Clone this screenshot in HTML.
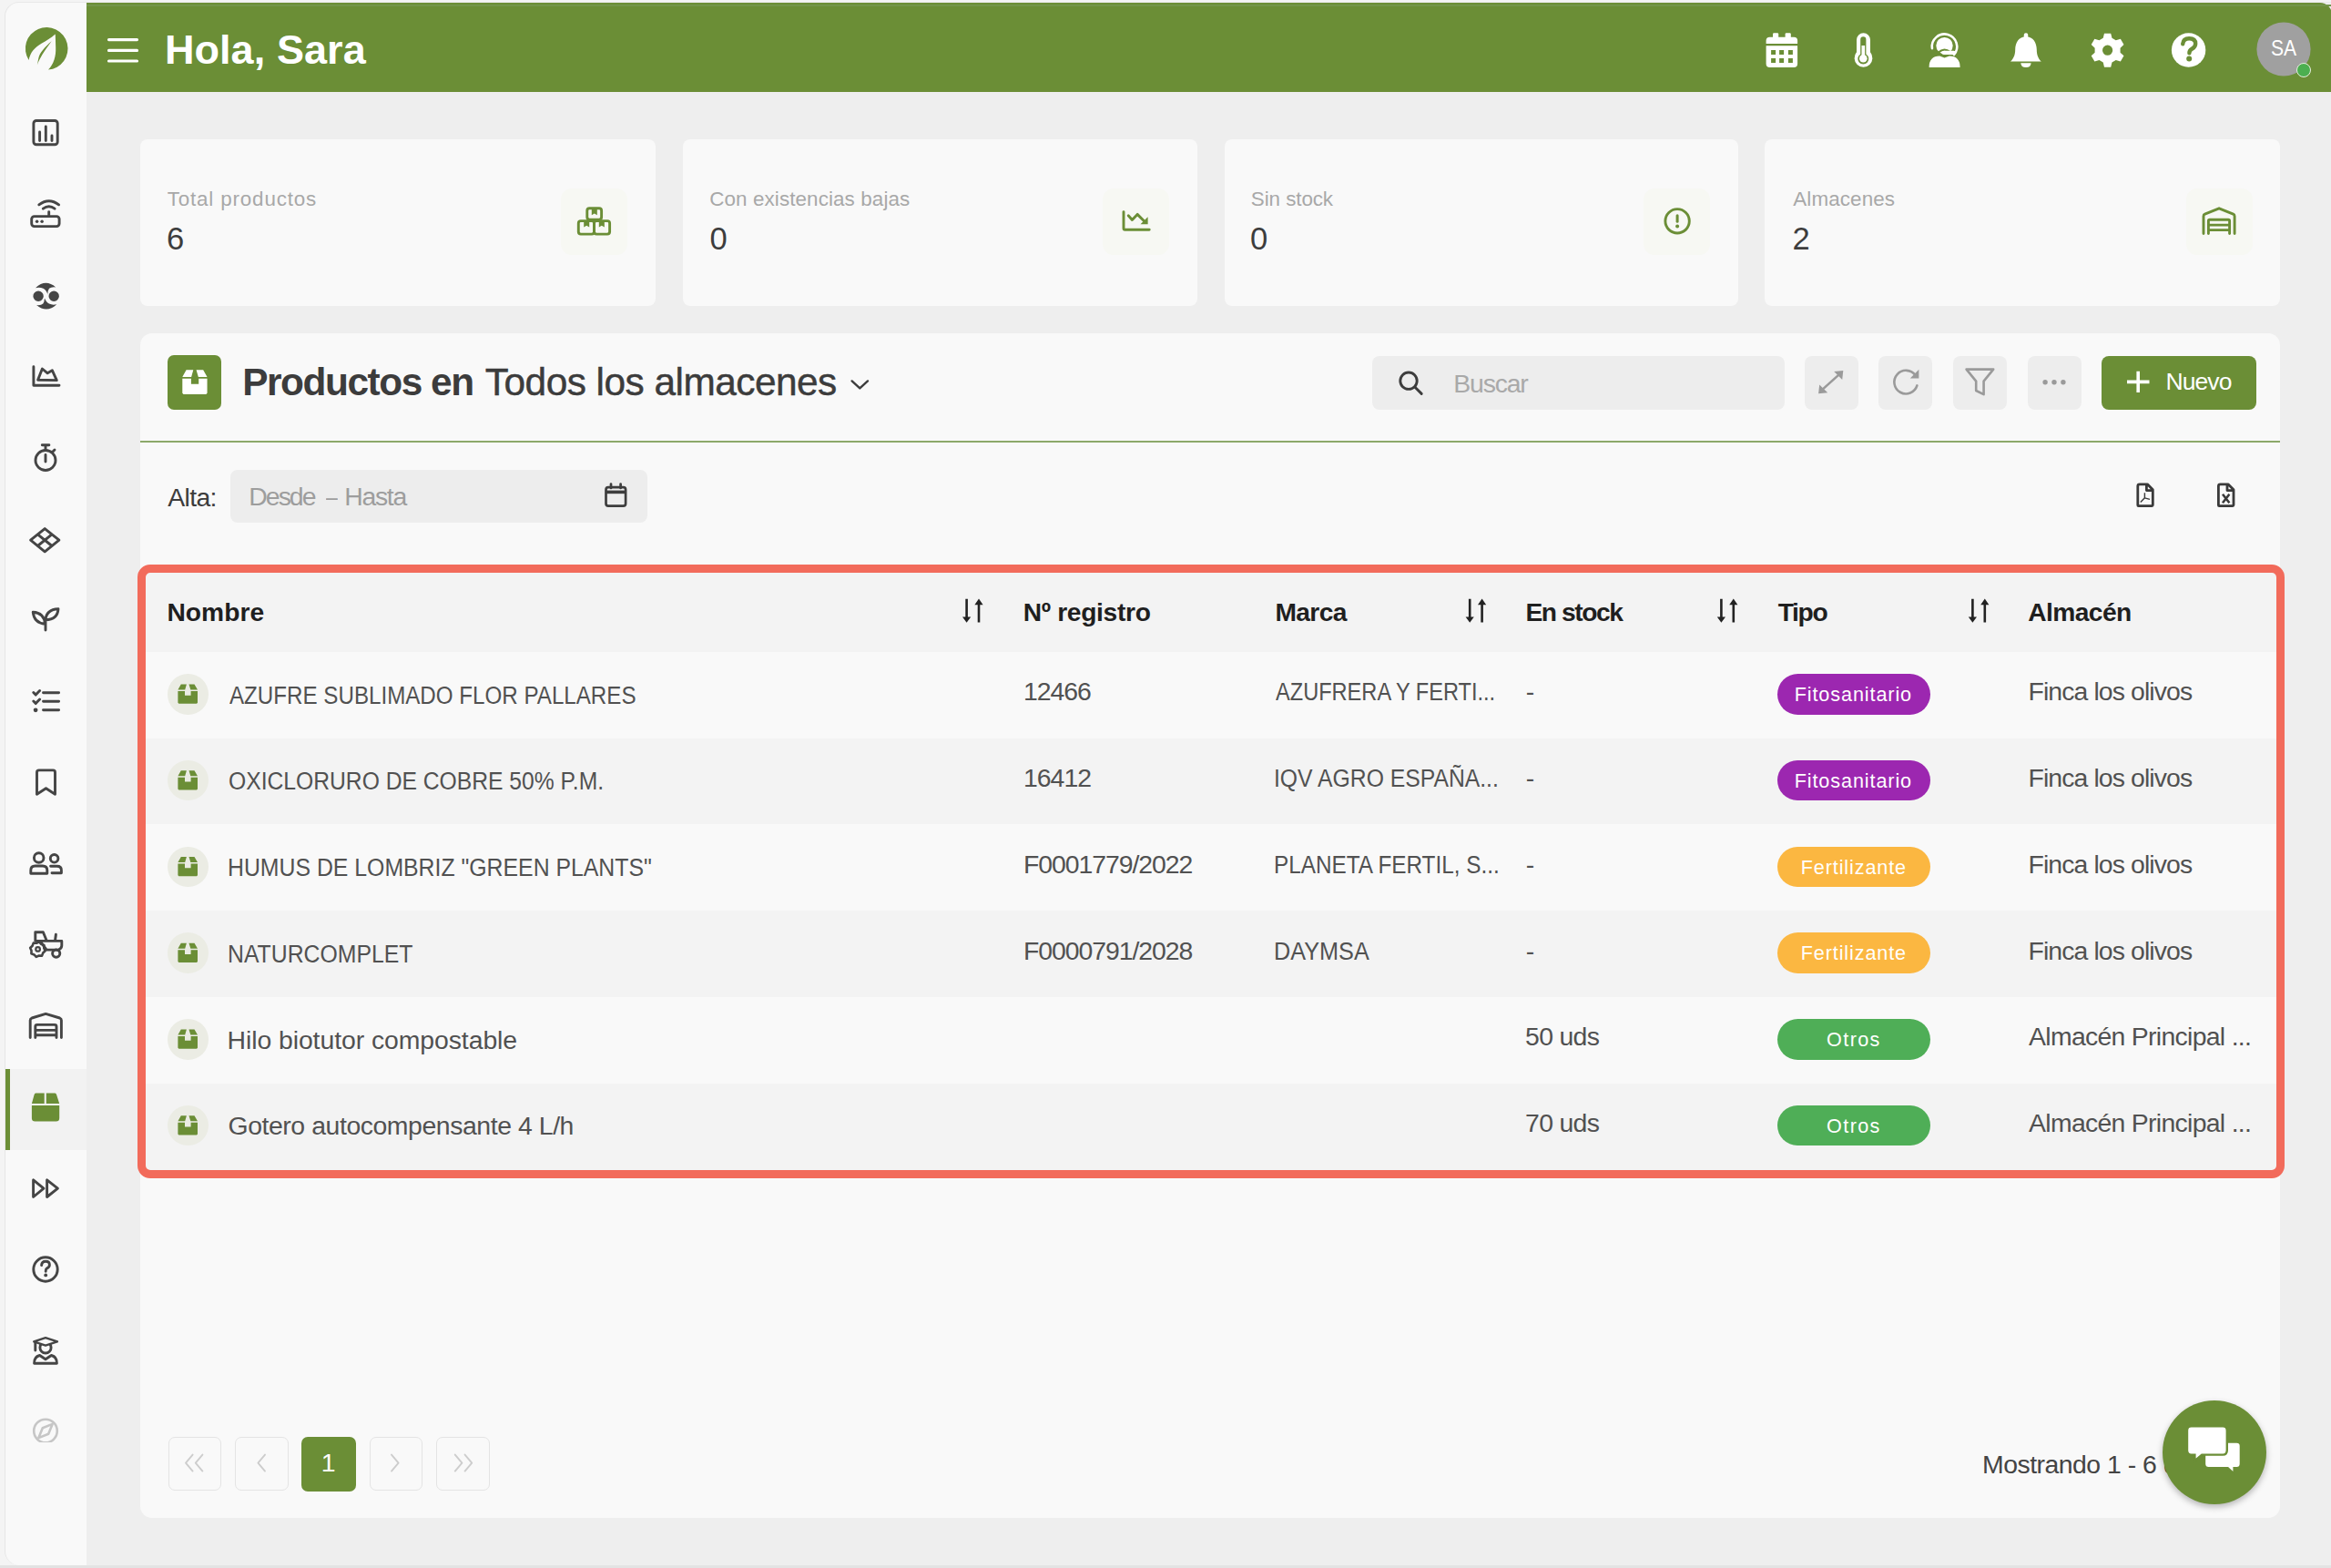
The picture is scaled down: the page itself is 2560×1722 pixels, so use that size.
<!DOCTYPE html>
<html><head><meta charset="utf-8">
<style>
*{box-sizing:border-box;margin:0;padding:0}
html,body{width:2560px;height:1722px;overflow:hidden}
body{background:#f4f4f4;position:relative;font-family:"Liberation Sans",sans-serif;color:#444}
.a{position:absolute}
.t{position:absolute;white-space:nowrap;line-height:1}
#bstrip{left:0;top:1719px;width:2560px;height:3px;background:#e3e3e3}
#win{left:5px;top:2px;width:2560px;height:1717px;border-left:1px solid #e6e6e6;border-top:1px solid #e9e9e9;border-radius:16px 0 0 16px;background:#eeeeee;overflow:hidden}
#side{left:0;top:0;width:89px;height:1716px;background:#f9f9f9}
#act{left:0;top:1170.5px;width:89px;height:89px;background:#f2f2f2}
#actbar{left:0;top:1170.5px;width:4.5px;height:89px;background:#6b8e36}
#hdr{left:89px;top:0;width:2466px;height:98px;background:#6b8e36;border-top-right-radius:13px}
#hdr .topline{left:0;top:2px;width:100%;height:2px;background:#739549}
.card{position:absolute;top:150px;height:183px;background:#f9f9f9;border-radius:8px}
.ib{position:absolute;top:54px;width:73px;height:73px;border-radius:12px;background:#f7f8f3}
#panel{left:148px;top:362.5px;width:2350px;height:1301px;background:#f9f9f9;border-radius:13px}
.lbl{font-size:25px;color:#a6a6a6}
.num{font-size:36px;color:#3d3d3d}
.rt{font-size:27.5px;color:#474747}
.bdg{position:absolute;left:1951.5px;width:168px;height:44.5px;border-radius:23px;color:#fff;font-size:23px;line-height:44.5px;text-align:center;white-space:nowrap}
</style></head>
<body>
<div id="bstrip" class="a"></div>
<div id="win" class="a">
  <div id="side" class="a"></div>
  <div id="act" class="a"></div>
  <div id="actbar" class="a"></div>
  <div id="hdr" class="a"><div class="topline a"></div></div>
  <div class="card" style="left:148px;width:566px"><div class="ib" style="left:462px"></div></div>
  <div class="card" style="left:743.5px;width:565.5px"><div class="ib" style="left:461.5px"></div></div>
  <div class="card" style="left:1339px;width:564px"><div class="ib" style="left:460px"></div></div>
  <div class="card" style="left:1932px;width:565.5px"><div class="ib" style="left:462.5px"></div></div>
  <div id="panel" class="a"></div>
</div>
<div class="a" style="left:1506.5px;top:390.5px;width:453px;height:59.5px;border-radius:8px;background:#ededed"></div>
<div class="a" style="left:1981.5px;top:390.5px;width:59px;height:59.5px;border-radius:8px;background:#ededed"></div>
<div class="a" style="left:2063px;top:390.5px;width:59px;height:59.5px;border-radius:8px;background:#ededed"></div>
<div class="a" style="left:2144.5px;top:390.5px;width:59.5px;height:59.5px;border-radius:8px;background:#ededed"></div>
<div class="a" style="left:2226.5px;top:390.5px;width:59px;height:59.5px;border-radius:8px;background:#ededed"></div>
<div class="a" style="left:2308px;top:390.5px;width:169.5px;height:59.5px;border-radius:8px;background:#6b8e36"></div>
<div class="a" style="left:184px;top:390.4px;width:59.4px;height:59.6px;border-radius:7px;background:#6b8e36"></div>
<div class="a" style="left:154px;top:484px;width:2349.5px;height:2px;background:#8ca96a"></div>
<div class="a" style="left:252.5px;top:516px;width:458.5px;height:58px;border-radius:8px;background:#ededed"></div>
<div class="a" style="left:160px;top:629px;width:2340px;height:87px;background:#f3f3f3"></div>
<div class="a" style="left:160px;top:811px;width:2340px;height:94px;background:#f3f3f3"></div>
<div class="a" style="left:160px;top:1000px;width:2340px;height:95px;background:#f3f3f3"></div>
<div class="a" style="left:160px;top:1190px;width:2340px;height:95px;background:#f3f3f3"></div>
<div class="a" style="left:151px;top:620px;width:2358px;height:673.7px;border:9px solid #f26b5b;border-radius:14px"></div>
<div class="a" style="left:184.3px;top:740px;width:44.6px;height:44.6px;border-radius:50%;background:#ebece4"></div>
<div class="a" style="left:184.3px;top:834.75px;width:44.6px;height:44.6px;border-radius:50%;background:#ebece4"></div>
<div class="a" style="left:184.3px;top:929.5px;width:44.6px;height:44.6px;border-radius:50%;background:#ebece4"></div>
<div class="a" style="left:184.3px;top:1024.25px;width:44.6px;height:44.6px;border-radius:50%;background:#ebece4"></div>
<div class="a" style="left:184.3px;top:1119px;width:44.6px;height:44.6px;border-radius:50%;background:#ebece4"></div>
<div class="a" style="left:184.3px;top:1213.75px;width:44.6px;height:44.6px;border-radius:50%;background:#ebece4"></div>
<div class="a" style="left:184.5px;top:1578px;width:58.5px;height:59px;border-radius:7px;border:1.5px solid #e4e4e4"></div>
<div class="a" style="left:258.25px;top:1578px;width:58.5px;height:59px;border-radius:7px;border:1.5px solid #e4e4e4"></div>
<div class="a" style="left:331px;top:1578px;width:59.5px;height:59.5px;border-radius:7px;background:#6b8e36"></div>
<div class="a" style="left:405.5px;top:1578px;width:58.5px;height:59px;border-radius:7px;border:1.5px solid #e4e4e4"></div>
<div class="a" style="left:479.25px;top:1578px;width:58.5px;height:59px;border-radius:7px;border:1.5px solid #e4e4e4"></div>

<svg class="a" style="left:0;top:0" width="2560" height="1722" viewBox="0 0 2560 1722">
<g stroke="#fff" stroke-width="3.2" stroke-linecap="round"><path d="M119.5 43.6H150.5M119.5 55.4H150.5M119.5 67H150.5"/></g>
<g fill="#fff"><rect x="1947" y="36.3" width="6.2" height="7" rx="1.2"/><rect x="1960.6" y="36.3" width="6.2" height="7" rx="1.2"/><path d="M1939.6 48V44.8Q1939.6 40.8 1943.6 40.8H1970.1Q1974.1 40.8 1974.1 44.8V48Z"/><path fill-rule="evenodd" d="M1939.6 50.3H1974.1V70.1Q1974.1 74.1 1970.1 74.1H1943.6Q1939.6 74.1 1939.6 70.1Z M1945.1 55.1h5v5h-5z M1954.1 55.1h5v5h-5z M1963.9 55.1h5v5h-5z M1945.1 64.1h5v5h-5z M1954.1 64.1h5v5h-5z M1963.9 64.1h5v5h-5z"/></g>
<g><path fill="#fff" d="M2039 43.8a7.5 7.5 0 0 1 15 0V57.3a9.9 9.9 0 1 1 -15 0Z"/><path fill="#6b8e36" d="M2043.2 43.4a3.1 3.1 0 0 1 6.2 0V59.4a6 6 0 1 1 -6.2 0Z"/><rect fill="#fff" x="2044.5" y="50" width="3.6" height="12"/><circle fill="#fff" cx="2046.3" cy="64.2" r="4.3"/></g>
<path fill="none" stroke="#fff" stroke-width="2.6" stroke-linecap="round" d="M2121.93 53.1A13.7 13.7 0 1 1 2146 60"/><circle fill="#fff" cx="2135.5" cy="50.1" r="9.2"/><path fill="none" stroke="#6b8e36" stroke-width="2.2" d="M2128.6 57.8Q2135 51.6 2141.8 57.2"/><path fill="#fff" d="M2132.6 57.9Q2132.6 55.8 2134.8 55.8H2145.6Q2147.8 55.8 2147.8 57.9Q2147.8 60 2145.6 60H2134.8Q2132.6 60 2132.6 57.9Z"/><path fill="#fff" d="M2118.6 74.1Q2118.6 61.6 2130.2 61.6L2135.5 63.4L2140.9 61.6Q2152.6 61.6 2152.6 74.1Z"/>
<g fill="#fff"><rect x="2222.8" y="36.3" width="4.4" height="6" rx="2"/><path d="M2225 40.2C2217 40.2 2213.2 47 2213.2 54.5C2213.2 61 2211 64.5 2208 67.6H2241.8C2238.8 64.5 2236.8 61 2236.8 54.5C2236.8 47 2233 40.2 2225 40.2Z"/><path d="M2219.3 69.2H2230.6Q2230.3 74.1 2225 74.1Q2219.6 74.1 2219.3 69.2Z"/></g>
<path fill="#fff" fill-rule="evenodd" d="M2309.74 41.86 L2310.99 36.65 L2318.21 36.65 L2319.46 41.86 L2323.73 44.32 L2328.86 42.80 L2332.47 49.05 L2328.58 52.73 L2328.58 57.67 L2332.47 61.35 L2328.86 67.60 L2323.73 66.08 L2319.46 68.54 L2318.21 73.75 L2310.99 73.75 L2309.74 68.54 L2305.47 66.08 L2300.34 67.60 L2296.73 61.35 L2300.62 57.67 L2300.62 52.73 L2296.73 49.05 L2300.34 42.80 L2305.47 44.32 Z M2309.00 55.20 a5.60 5.60 0 1 0 11.20 0 a5.60 5.60 0 1 0 -11.20 0 Z"/>
<circle fill="#fff" cx="2403.6" cy="55" r="18.7"/><path fill="none" stroke="#6b8e36" stroke-width="4.4" stroke-linecap="round" d="M2397.2 48.2Q2397.8 42.2 2404.2 42.2Q2411.2 42.2 2411.2 48Q2411.2 51.6 2407.2 53.8Q2404.4 55.4 2404.4 58.2"/><circle fill="#6b8e36" cx="2404.2" cy="64.6" r="3"/>
<circle fill="#a0a0a0" cx="2508" cy="54" r="29.6"/>
<g fill="#6b8e36"><path d="M31.6 66A23.3 23.3 0 1 1 53 76.6C59 70.5 61.6 62 61.2 52C61 46 61 41 60.7 37.4C56 41.5 51 44.5 45.5 47.8C38.2 52.2 33.2 57.5 31.6 66Z"/><path d="M56.6 45.3C49.5 51.5 43.5 58 42.3 64C41.8 66.8 41.2 69.5 40.8 71.6C43.3 64.5 48 56.8 56.6 45.3Z"/></g>
<g fill="none" stroke="#454545" stroke-width="2.9" stroke-linecap="round" stroke-linejoin="round">
<rect x="36.9" y="132.5" width="26.3" height="26.3" rx="3"/><path d="M43.6 145V154.6M50.3 139V154.6M57 149V154.6"/>
<rect x="34.7" y="237.6" width="30.4" height="11" rx="3"/><path d="M53.7 237.6V232.6M47.3 229.2Q53.7 224.3 60.1 229.2M42.8 224.8Q53.7 216.5 64.6 224.8"/>
<path d="M36.9 402.8V423.3H65"/><path d="M41.6 417.3L46.4 405L52.2 409.8L57.4 406.8L62.3 417.6Z"/>
<circle cx="50" cy="505.5" r="11"/><path d="M46.3 488.7H53.9M50 489V494.5M57.5 496.5L60 494M50 499.5V507"/>
<path d="M33.6 593.2L49.2 580.6L64.9 593.2L49.2 605.8Z M41.4 586.9L57 599.5 M57 586.9L41.4 599.5"/>
<path d="M36.2 672.2Q37.5 684.5 49.5 685.2Q48.5 672.8 36.2 672.2Z M50 680.8Q50.8 669.2 64 668.7Q63.2 680.6 50 680.8Z M50 681V692"/>
<path d="M36.8 760.6L39.2 763.1L43.6 758.6 M36.8 770.1L39.2 772.6L43.6 768.1 M47.5 760.8H64.6 M47.5 770.3H64.6 M47.5 779.8H64.6"/>
<path d="M40.5 872.2V848.2Q40.5 845.9 42.8 845.9H58.3Q60.5 845.9 60.5 848.2V872.2L50.5 865.8Z"/>
<circle cx="42.7" cy="942" r="5.3"/><circle cx="59.6" cy="942.8" r="4.3"/><path d="M33.8 959.3V955.8Q33.8 951 38.6 951H46.8Q51.8 951 51.8 955.8V959.3Z M55.6 951.3H62.6Q67.4 951.3 67.4 955.8V958.7H57"/>
<path stroke-width="2.6" d="M49.64 1044.24 L47.22 1046.49 L46.07 1049.58 L42.77 1049.47 L39.76 1050.84 L37.51 1048.42 L34.42 1047.27 L34.53 1043.97 L33.16 1040.96 L35.58 1038.71 L36.73 1035.62 L40.03 1035.73 L43.04 1034.36 L45.29 1036.78 L48.38 1037.93 L48.27 1041.23Z"/><circle cx="41.6" cy="1042.4" r="2.3" stroke-width="2.2"/><circle cx="61.7" cy="1047.1" r="4.1"/><path d="M38.8 1033.2V1023.8H47.4L51.3 1033.2 M39.6 1033.4H67.8V1038.6Q67.8 1041.6 64.3 1043.1H51.2L44.3 1034 M61.4 1026.3L60.5 1033"/>
<path d="M33.2 1139.6V1120.6Q33.2 1118.8 35 1118L50.2 1113.4L65.6 1118Q67.4 1118.8 67.4 1120.6V1139.6 M38.8 1139.6V1127.4Q38.8 1125.4 40.8 1125.4H60Q62 1125.4 62 1127.4V1139.6 M38.8 1131.4H62 M38.8 1136.7H62"/>
<path d="M36.6 1295.9V1314.5L48 1305.2Z M51.6 1295.9V1314.5L63.4 1305.2Z"/>
<circle cx="50" cy="1394" r="13.2"/><path d="M45.6 1389.6Q45.8 1385.2 50.2 1385.2Q54.4 1385.2 54.4 1389Q54.4 1391.6 51.6 1392.8Q50.2 1393.6 50.2 1396.2"/>
<path d="M38.8 1474V1483 M37.6 1497.2Q37.4 1490 43.6 1488.5L50 1492.8L56.4 1488.5Q62.6 1490 62.4 1497.2Z"/><circle cx="50" cy="1479.9" r="6.1"/>
</g>
<circle fill="#454545" cx="50.2" cy="1400.4" r="1.9"/><circle fill="#454545" cx="40.6" cy="243.2" r="1.75"/><circle fill="#454545" cx="46.1" cy="243.2" r="1.75"/><circle fill="#454545" cx="39.1" cy="779.8" r="2.4"/>
<path fill="#f9f9f9" stroke="#454545" stroke-width="2.3" stroke-linejoin="round" d="M37.2 1473.4L50 1469.1L63 1473.4L50 1477.6Z"/>
<g fill="#454545"><path d="M39 316.2Q50 305.8 61.2 315.4Q56.5 314.8 54 316.8Q52.2 319 52.6 323.6Q50.8 318.6 47.4 316.8Q43.5 315 39 316.2Z"/><path d="M62.3 334.2Q51.3 344.6 40.1 335Q44.8 335.6 47.3 333.6Q49.1 331.4 48.7 326.8Q50.5 331.8 53.9 333.6Q57.8 335.4 62.3 334.2Z"/></g><g fill="#454545" stroke="#f9f9f9" stroke-width="1.6"><circle cx="42.1" cy="325.2" r="6.5"/><circle cx="59.2" cy="325.2" r="6.5"/></g>
<g fill="#6b8e36"><path d="M39.3 1200.4H48.7V1212H34.9L37.5 1202.6Q38 1200.4 39.3 1200.4Z"/><path d="M50.8 1200.4H60.3Q61.7 1200.4 62.2 1202.6L65.2 1212H50.8Z"/><path d="M34.9 1214H65.2V1228Q65.2 1231.6 61.6 1231.6H38.5Q34.9 1231.6 34.9 1228Z"/></g>
<svg x="0" y="1540" width="95" height="44" viewBox="0 1540 95 44" overflow="hidden"><g fill="none" stroke="#c6c6c6" stroke-width="2.6"><circle cx="50" cy="1571.5" r="12.8"/><path stroke-linejoin="round" d="M57.6 1563.9L53.2 1574.7L42.4 1579.1L46.8 1568.3Z"/></g></svg>
<g fill="none" stroke="#6b8e36" stroke-width="2.9" stroke-linejoin="round">
<rect x="644.8" y="228.8" width="15.8" height="12.4" rx="2.6"/><rect x="635.3" y="242.6" width="17.2" height="14.5" rx="2.6"/><rect x="652.5" y="242.6" width="17.1" height="14.5" rx="2.6"/>
<path stroke-linecap="round" d="M1234 232.6V250.8Q1234 252.3 1235.5 252.3H1262.2"/><path stroke-linecap="round" d="M1239.2 236.8L1243.4 241.5L1249.1 235.4L1256.5 242.8"/>
<circle cx="1842.1" cy="242.8" r="13.2"/>
<path stroke-linecap="round" d="M2420 256.6V237.4Q2420 235.8 2421.5 235.2L2437.1 228.8L2452.6 235.2Q2454.1 235.8 2454.1 237.4V256.6 M2425.4 256.6V242.7Q2425.4 241.3 2426.8 241.3H2447.2Q2448.6 241.3 2448.6 242.7V256.6 M2425.4 247.1H2448.6 M2425.4 252.6H2448.6"/>
</g>
<g fill="#6b8e36"><path d="M649.8 229.5H655.8V236.2L652.8 234.4L649.8 236.2Z M641.2 243.2H647.2V249.6L644.2 247.8L641.2 249.6Z M657.8 243.2H663.8V249.6L660.8 247.8L657.8 249.6Z"/>
<path d="M1252.5 246.2H1260.6V238.3Z"/>
<rect x="1840.6" y="235.2" width="3" height="9.6" rx="1.5"/><circle cx="1842.1" cy="248.6" r="2"/></g>
<path fill="#fff" d="M204.59 406.20 L212.29 406.20 L210.14 413.90 L200.30 413.90 Z M215.57 406.20 L223.14 406.20 L227.56 413.90 L217.84 413.90 Z M200.30 415.66 L209.89 415.66 L209.89 421.72 L218.22 421.72 L218.22 415.66 L227.56 415.66 L227.56 431.69 L226.30 432.95 L201.56 432.95 L200.30 431.69 Z"/>
<g fill="none" stroke="#3d3d3d" stroke-width="2.9" stroke-linecap="round"><circle cx="1547" cy="418.2" r="9.2"/><path d="M1553.8 425L1561.2 432.4"/></g>
<g fill="none" stroke="#9a9a9a" stroke-width="2.6" stroke-linecap="round" stroke-linejoin="round">
<path d="M2000.5 428.6L2020.8 410.4"/>
<path d="M2103.6 412.2A12.8 12.8 0 1 0 2105.4 423.4"/>
<path d="M2159.6 405.6H2189.2L2178.6 418.6V433.2L2170.2 429V418.6Z"/>
</g>
<g fill="#9a9a9a"><path d="M1997.1 432.2L1998.2 422.4L2007.2 431.2Z M2024.3 407.1L2023.2 416.9L2014.2 408.1Z"/><path d="M2107.4 405.8L2107.4 415.6L2097.8 415.6Z"/><circle cx="2246.1" cy="419.8" r="2.7"/><circle cx="2256" cy="419.8" r="2.7"/><circle cx="2265.9" cy="419.8" r="2.7"/></g>
<path stroke="#fff" stroke-width="3.6" d="M2336 419.4H2360.5M2348.2 407.8V431"/>
<path fill="none" stroke="#3c3c3c" stroke-width="2.4" stroke-linecap="round" stroke-linejoin="round" d="M935.6 418.4L944.3 426.4L953 418.4"/>
<g fill="none" stroke="#3d3d3d" stroke-width="2.7" stroke-linejoin="round"><rect x="665.5" y="535.2" width="21.6" height="20.5" rx="2.6"/><path d="M665.5 540.4H687.1" stroke-width="3.6"/><path stroke-linecap="round" d="M671 531.6V536 M681.6 531.6V536"/></g>
<g fill="none" stroke="#3a3a3a" stroke-width="2.8" stroke-linejoin="round"><path d="M2347.8 554.8V533.8Q2347.8 531.8 2349.8 531.8H2358.4L2364.3 537.8V554.6Q2364.3 555.6 2363.3 555.6H2348.6Q2347.8 555.6 2347.8 554.8Z M2357.4 532V538.6H2364"/><path d="M2436.4 554.8V533.8Q2436.4 531.8 2438.4 531.8H2447L2453 537.8V554.6Q2453 555.6 2452 555.6H2437.2Q2436.4 555.6 2436.4 554.8Z M2446 532V538.6H2452.6"/></g>
<path fill="none" stroke="#3a3a3a" stroke-width="1.4" d="M2355.4 541.2V546.8M2355.4 546.8L2350.8 551.6M2355.4 546.8L2361 548.4"/>
<path fill="none" stroke="#3a3a3a" stroke-width="2.6" d="M2441 542.8L2448.4 552.2M2448.4 542.8L2441 552.2"/>
<path stroke="#222" stroke-width="2.6" d="M1061.6 657.8V679M1075.0 662.5V683.6"/><path fill="#222" d="M1057.0 677.4H1066.2L1061.6 683.8Z M1070.4 664.2H1079.6L1075.0 657.6Z"/>
<path stroke="#222" stroke-width="2.6" d="M1614.2 657.8V679M1627.6 662.5V683.6"/><path fill="#222" d="M1609.6 677.4H1618.8L1614.2 683.8Z M1623.0 664.2H1632.2L1627.6 657.6Z"/>
<path stroke="#222" stroke-width="2.6" d="M1890.4 657.8V679M1903.8 662.5V683.6"/><path fill="#222" d="M1885.8 677.4H1895.0L1890.4 683.8Z M1899.2 664.2H1908.4L1903.8 657.6Z"/>
<path stroke="#222" stroke-width="2.6" d="M2166.4 657.8V679M2179.8 662.5V683.6"/><path fill="#222" d="M2161.8 677.4H2171.0L2166.4 683.8Z M2175.2 664.2H2184.4L2179.8 657.6Z"/>
<path fill="#6b8e36" d="M198.80 751.50 L204.90 751.50 L203.20 757.60 L195.40 757.60 Z M207.50 751.50 L213.50 751.50 L217.00 757.60 L209.30 757.60 Z M195.40 759.00 L203.00 759.00 L203.00 763.80 L209.60 763.80 L209.60 759.00 L217.00 759.00 L217.00 771.70 L216.00 772.70 L196.40 772.70 L195.40 771.70 Z"/>
<path fill="#6b8e36" d="M198.80 846.25 L204.90 846.25 L203.20 852.35 L195.40 852.35 Z M207.50 846.25 L213.50 846.25 L217.00 852.35 L209.30 852.35 Z M195.40 853.75 L203.00 853.75 L203.00 858.55 L209.60 858.55 L209.60 853.75 L217.00 853.75 L217.00 866.45 L216.00 867.45 L196.40 867.45 L195.40 866.45 Z"/>
<path fill="#6b8e36" d="M198.80 941.00 L204.90 941.00 L203.20 947.10 L195.40 947.10 Z M207.50 941.00 L213.50 941.00 L217.00 947.10 L209.30 947.10 Z M195.40 948.50 L203.00 948.50 L203.00 953.30 L209.60 953.30 L209.60 948.50 L217.00 948.50 L217.00 961.20 L216.00 962.20 L196.40 962.20 L195.40 961.20 Z"/>
<path fill="#6b8e36" d="M198.80 1035.75 L204.90 1035.75 L203.20 1041.85 L195.40 1041.85 Z M207.50 1035.75 L213.50 1035.75 L217.00 1041.85 L209.30 1041.85 Z M195.40 1043.25 L203.00 1043.25 L203.00 1048.05 L209.60 1048.05 L209.60 1043.25 L217.00 1043.25 L217.00 1055.95 L216.00 1056.95 L196.40 1056.95 L195.40 1055.95 Z"/>
<path fill="#6b8e36" d="M198.80 1130.50 L204.90 1130.50 L203.20 1136.60 L195.40 1136.60 Z M207.50 1130.50 L213.50 1130.50 L217.00 1136.60 L209.30 1136.60 Z M195.40 1138.00 L203.00 1138.00 L203.00 1142.80 L209.60 1142.80 L209.60 1138.00 L217.00 1138.00 L217.00 1150.70 L216.00 1151.70 L196.40 1151.70 L195.40 1150.70 Z"/>
<path fill="#6b8e36" d="M198.80 1225.25 L204.90 1225.25 L203.20 1231.35 L195.40 1231.35 Z M207.50 1225.25 L213.50 1225.25 L217.00 1231.35 L209.30 1231.35 Z M195.40 1232.75 L203.00 1232.75 L203.00 1237.55 L209.60 1237.55 L209.60 1232.75 L217.00 1232.75 L217.00 1245.45 L216.00 1246.45 L196.40 1246.45 L195.40 1245.45 Z"/>
<g fill="none" stroke="#cdcdcd" stroke-width="1.9" stroke-linecap="round" stroke-linejoin="round">
<path d="M211.6 1597.6L204 1606.6L211.6 1615.6M222.4 1597.6L214.8 1606.6L222.4 1615.6"/>
<path d="M291 1597.6L283.4 1606.6L291 1615.6"/>
<path d="M430 1597.6L437.6 1606.6L430 1615.6"/>
<path d="M499.8 1597.6L507.4 1606.6L499.8 1615.6M510.6 1597.6L518.2 1606.6L510.6 1615.6"/>
</g>
</svg>
<div class="a" style="left:2521.6px;top:68.6px;width:16px;height:16px;border-radius:50%;background:#4caf50;border:1.6px solid #e8efe0"></div>
<div class="a" style="left:1951.5px;top:740px;width:168px;height:44.6px;border-radius:23px;background:#9c27b0"></div>
<div class="a" style="left:1951.5px;top:834.75px;width:168px;height:44.6px;border-radius:23px;background:#9c27b0"></div>
<div class="a" style="left:1951.5px;top:929.5px;width:168px;height:44.6px;border-radius:23px;background:#fbb741"></div>
<div class="a" style="left:1951.5px;top:1024.25px;width:168px;height:44.6px;border-radius:23px;background:#fbb741"></div>
<div class="a" style="left:1951.5px;top:1119px;width:168px;height:44.6px;border-radius:23px;background:#4fae57"></div>
<div class="a" style="left:1951.5px;top:1213.75px;width:168px;height:44.6px;border-radius:23px;background:#4fae57"></div>

<div class="t" id="hola" style="left:180.90px;top:32.35px;font-size:45.00px;font-weight:bold;letter-spacing:0.080px;color:#fff">Hola, Sara</div>
<div class="t" id="sa" style="left:2493.73px;top:41.17px;font-size:24.50px;transform:scaleX(0.8602);transform-origin:0 0;color:#fff">SA</div>
<div class="t" id="lbl0" style="left:183.66px;top:207.96px;font-size:22.40px;letter-spacing:0.842px;color:#a8a8a8">Total productos</div>
<div class="t" id="lbl1" style="left:779.26px;top:207.96px;font-size:22.40px;letter-spacing:0.108px;color:#a8a8a8">Con existencias bajas</div>
<div class="t" id="lbl2" style="left:1373.86px;top:207.96px;font-size:22.40px;letter-spacing:-0.079px;color:#a8a8a8">Sin stock</div>
<div class="t" id="lbl3" style="left:1969.26px;top:207.96px;font-size:22.40px;letter-spacing:0.124px;color:#a8a8a8">Almacenes</div>
<div class="t" id="num0" style="left:182.92px;top:245.09px;font-size:34.60px;color:#3d3d3d">6</div>
<div class="t" id="num1" style="left:779.52px;top:245.09px;font-size:34.60px;color:#3d3d3d">0</div>
<div class="t" id="num2" style="left:1373.12px;top:245.09px;font-size:34.60px;color:#3d3d3d">0</div>
<div class="t" id="num3" style="left:1968.52px;top:245.09px;font-size:34.60px;color:#3d3d3d">2</div>
<div class="t" id="title1" style="left:266.26px;top:399.16px;font-size:42.40px;font-weight:bold;letter-spacing:-1.456px;color:#3c3c3c">Productos en</div>
<div class="t" id="title2" style="left:532.86px;top:399.16px;font-size:42.40px;letter-spacing:-0.525px;color:#3c3c3c;-webkit-text-stroke:0.45px #3c3c3c">Todos los almacenes</div>
<div class="t" id="alta" style="left:184.30px;top:531.86px;font-size:28.40px;letter-spacing:-0.653px;color:#3c3c3c">Alta:</div>
<div class="t" id="desde" style="left:273.30px;top:530.86px;font-size:28.40px;letter-spacing:-1.980px;color:#9d9d9d">Desde</div>
<div class="t" id="dash" style="left:357.80px;top:530.86px;font-size:28.40px;transform:scaleX(0.8107);transform-origin:0 0;color:#9d9d9d">–</div>
<div class="t" id="hasta" style="left:378.30px;top:530.86px;font-size:28.40px;letter-spacing:-1.305px;color:#9d9d9d">Hasta</div>
<div class="t" id="buscar" style="left:1596.30px;top:406.66px;font-size:28.40px;letter-spacing:-1.188px;color:#a9a9a9">Buscar</div>
<div class="t" id="nuevo" style="left:2378.41px;top:405.88px;font-size:26.50px;letter-spacing:-0.900px;color:#fff">Nuevo</div>
<div class="t" id="h0" style="left:183.51px;top:658.03px;font-size:28.20px;font-weight:bold;letter-spacing:0.018px;color:#1f1f1f">Nombre</div>
<div class="t" id="h1" style="left:1123.71px;top:658.03px;font-size:28.20px;font-weight:bold;letter-spacing:-0.324px;color:#1f1f1f">Nº registro</div>
<div class="t" id="h2" style="left:1400.51px;top:658.03px;font-size:28.20px;font-weight:bold;letter-spacing:-0.652px;color:#1f1f1f">Marca</div>
<div class="t" id="h3" style="left:1675.51px;top:658.03px;font-size:28.20px;font-weight:bold;letter-spacing:-1.427px;color:#1f1f1f">En stock</div>
<div class="t" id="h4" style="left:1952.71px;top:658.03px;font-size:28.20px;font-weight:bold;letter-spacing:-1.320px;color:#1f1f1f">Tipo</div>
<div class="t" id="h5" style="left:2227.31px;top:658.03px;font-size:28.20px;font-weight:bold;letter-spacing:-0.600px;color:#1f1f1f">Almacén</div>
<div class="t" id="n0" style="left:251.70px;top:748.56px;font-size:28.40px;transform:scaleX(0.8508);transform-origin:0 0;color:#515151">AZUFRE SUBLIMADO FLOR PALLARES</div>
<div class="t" id="n1" style="left:250.70px;top:843.31px;font-size:28.40px;transform:scaleX(0.8688);transform-origin:0 0;color:#515151">OXICLORURO DE COBRE 50% P.M.</div>
<div class="t" id="n2" style="left:249.70px;top:938.06px;font-size:28.40px;transform:scaleX(0.8742);transform-origin:0 0;color:#515151">HUMUS DE LOMBRIZ "GREEN PLANTS"</div>
<div class="t" id="n3" style="left:249.70px;top:1032.81px;font-size:28.40px;transform:scaleX(0.8732);transform-origin:0 0;color:#515151">NATURCOMPLET</div>
<div class="t" id="n4" style="left:249.50px;top:1127.56px;font-size:28.40px;letter-spacing:-0.071px;color:#515151">Hilo biotutor compostable</div>
<div class="t" id="n5" style="left:250.50px;top:1222.31px;font-size:28.40px;letter-spacing:-0.427px;color:#515151">Gotero autocompensante 4 L/h</div>
<div class="t" id="r0" style="left:1123.90px;top:745.46px;font-size:28.40px;letter-spacing:-0.990px;color:#515151">12466</div>
<div class="t" id="m0" style="left:1400.70px;top:745.46px;font-size:28.40px;transform:scaleX(0.8308);transform-origin:0 0;color:#515151">AZUFRERA Y FERTI...</div>
<div class="t" id="s0" style="left:1675.70px;top:745.46px;font-size:28.40px;color:#515151">-</div>
<div class="t" id="a0" style="left:2227.50px;top:745.46px;font-size:28.40px;letter-spacing:-0.894px;color:#515151">Finca los olivos</div>
<div class="t" id="r1" style="left:1123.90px;top:840.21px;font-size:28.40px;letter-spacing:-0.945px;color:#515151">16412</div>
<div class="t" id="m1" style="left:1398.70px;top:840.21px;font-size:28.40px;transform:scaleX(0.8708);transform-origin:0 0;color:#515151">IQV AGRO ESPAÑA...</div>
<div class="t" id="s1" style="left:1675.70px;top:840.21px;font-size:28.40px;color:#515151">-</div>
<div class="t" id="a1" style="left:2227.50px;top:840.21px;font-size:28.40px;letter-spacing:-0.894px;color:#515151">Finca los olivos</div>
<div class="t" id="r2" style="left:1123.90px;top:934.96px;font-size:28.40px;letter-spacing:-1.035px;color:#515151">F0001779/2022</div>
<div class="t" id="m2" style="left:1398.70px;top:934.96px;font-size:28.40px;transform:scaleX(0.8563);transform-origin:0 0;color:#515151">PLANETA FERTIL, S...</div>
<div class="t" id="s2" style="left:1675.70px;top:934.96px;font-size:28.40px;color:#515151">-</div>
<div class="t" id="a2" style="left:2227.50px;top:934.96px;font-size:28.40px;letter-spacing:-0.894px;color:#515151">Finca los olivos</div>
<div class="t" id="r3" style="left:1123.90px;top:1029.71px;font-size:28.40px;letter-spacing:-1.035px;color:#515151">F0000791/2028</div>
<div class="t" id="m3" style="left:1398.70px;top:1029.71px;font-size:28.40px;transform:scaleX(0.8890);transform-origin:0 0;color:#515151">DAYMSA</div>
<div class="t" id="s3" style="left:1675.70px;top:1029.71px;font-size:28.40px;color:#515151">-</div>
<div class="t" id="a3" style="left:2227.50px;top:1029.71px;font-size:28.40px;letter-spacing:-0.894px;color:#515151">Finca los olivos</div>
<div class="t" id="s4" style="left:1675.10px;top:1124.46px;font-size:28.40px;letter-spacing:-0.684px;color:#515151">50 uds</div>
<div class="t" id="a4" style="left:2228.10px;top:1124.46px;font-size:28.40px;letter-spacing:-0.697px;color:#515151">Almacén Principal ...</div>
<div class="t" id="s5" style="left:1675.10px;top:1219.21px;font-size:28.40px;letter-spacing:-0.684px;color:#515151">70 uds</div>
<div class="t" id="a5" style="left:2228.10px;top:1219.21px;font-size:28.40px;letter-spacing:-0.697px;color:#515151">Almacén Principal ...</div>
<div class="t" id="b0" style="left:1970.70px;top:752.24px;font-size:21.60px;letter-spacing:0.900px;color:#fff">Fitosanitario</div>
<div class="t" id="b1" style="left:1970.70px;top:846.99px;font-size:21.60px;letter-spacing:0.900px;color:#fff">Fitosanitario</div>
<div class="t" id="b2" style="left:1977.70px;top:941.74px;font-size:21.60px;letter-spacing:0.892px;color:#fff">Fertilizante</div>
<div class="t" id="b3" style="left:1977.70px;top:1036.49px;font-size:21.60px;letter-spacing:0.892px;color:#fff">Fertilizante</div>
<div class="t" id="b4" style="left:2006.10px;top:1131.24px;font-size:21.60px;letter-spacing:1.373px;color:#fff">Otros</div>
<div class="t" id="b5" style="left:2006.10px;top:1225.99px;font-size:21.60px;letter-spacing:1.373px;color:#fff">Otros</div>
<div class="t" id="most" style="left:2177.10px;top:1594.06px;font-size:28.40px;letter-spacing:-0.514px;color:#444">Mostrando 1 - 6</div>
<div class="t" id="most2" style="left:2376px;top:1594.06px;font-size:28.40px;letter-spacing:-0.5px;color:#444">de 6</div>
<div class="t" id="pg1" style="left:331px;width:59.5px;text-align:center;top:1592.46px;font-size:28.40px;color:#fff">1</div>
<div class="a" style="left:2374.9px;top:1537.8px;width:114px;height:114px;border-radius:50%;background:#6b8e36;box-shadow:0 3px 7px rgba(0,0,0,.28)"></div>
<svg class="a" style="left:0;top:0" width="2560" height="1722" viewBox="0 0 2560 1722"><path fill="#fff" stroke="#6b8e36" stroke-width="2.4" d="M2424.2 1583.6H2456.4Q2460.9 1583.6 2460.9 1588.1V1607.6Q2460.9 1612.3 2456.4 1612.3H2453.6V1618.6L2446.6 1612.3H2425.6Q2421 1612.3 2421 1607.6V1588.1Q2421 1583.6 2424.2 1583.6Z"/><path fill="#fff" stroke="#6b8e36" stroke-width="2.4" d="M2406.6 1566.4H2441.2Q2445.8 1566.4 2445.8 1571V1592.8Q2445.8 1597.6 2441.2 1597.6H2418.2L2410.4 1604.2V1597.6H2406.6Q2402 1597.6 2402 1592.8V1571Q2402 1566.4 2406.6 1566.4Z"/></svg>

</body></html>
